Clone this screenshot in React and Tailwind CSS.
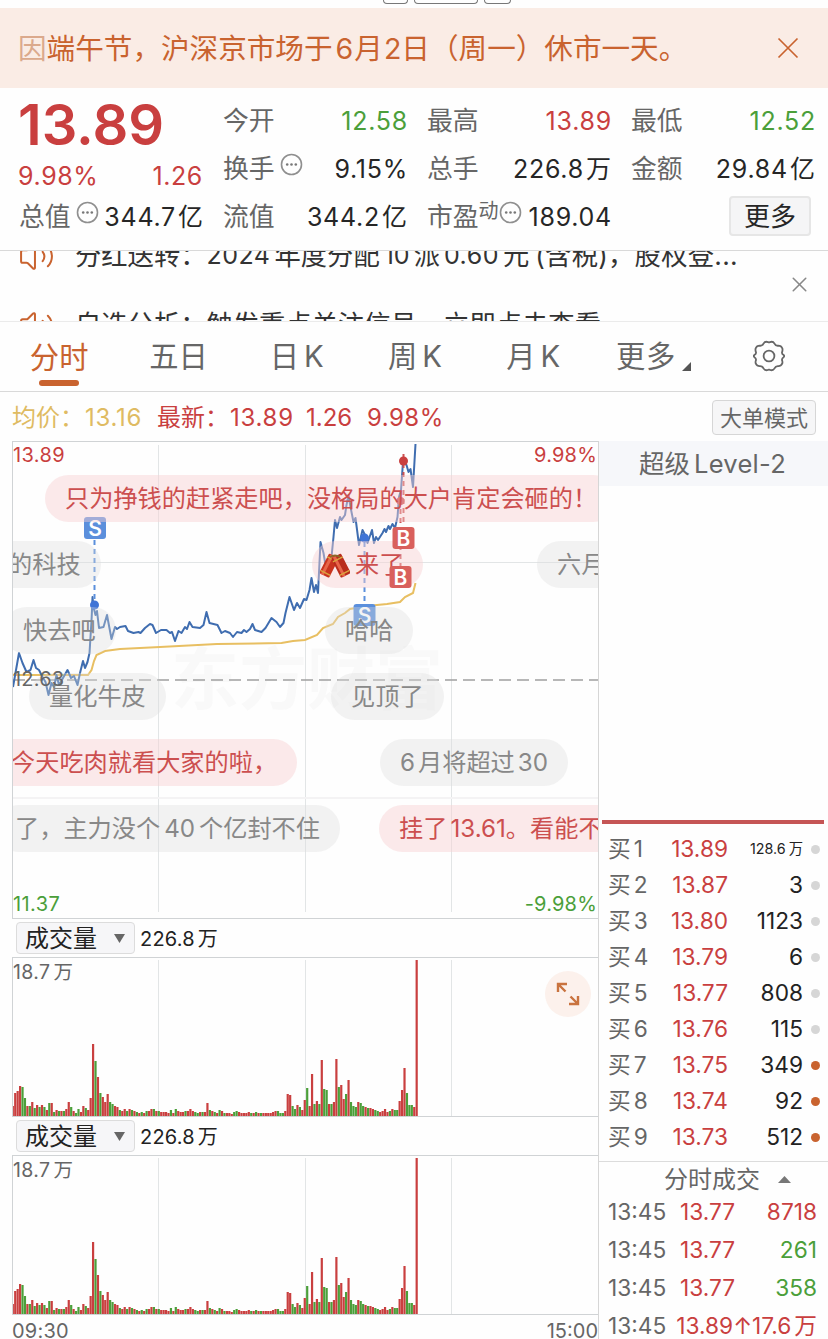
import { Volume2, X } from "lucide-react";

const RED = "#c93f3f";
const GREEN = "#4b9f3a";

const quoteColumns = [
    [
        { label: "今开", value: "12.58", tone: "text-[#4b9f3a]" },
        { label: "换手", value: "9.15%", info: true },
        { label: "流值", value: "344.2", unit: "亿" },
    ],
    [
        { label: "最高", value: "13.89", tone: "text-[#c93f3f]" },
        { label: "总手", value: "226.8", unit: "万" },
        { label: "市盈", value: "189.04", sup: "动", info: true },
    ],
    [
        { label: "最低", value: "12.52", tone: "text-[#4b9f3a]" },
        { label: "金额", value: "29.84", unit: "亿" },
    ],
];

const bids = [
    { n: 1, price: "13.89", vol: "128.6", unit: "万" },
    { n: 2, price: "13.87", vol: "3" },
    { n: 3, price: "13.80", vol: "1123" },
    { n: 4, price: "13.79", vol: "6" },
    { n: 5, price: "13.77", vol: "808" },
    { n: 6, price: "13.76", vol: "115" },
    { n: 7, price: "13.75", vol: "349", mine: true },
    { n: 8, price: "13.74", vol: "92", mine: true },
    { n: 9, price: "13.73", vol: "512", mine: true },
];

const trades = [
    { price: "13.77", vol: "8718", tone: "text-[#c93f3f]" },
    { price: "13.77", vol: "261", tone: "text-[#4b9f3a]" },
    { price: "13.77", vol: "358", tone: "text-[#4b9f3a]" },
];

// one bar per minute, negative = falling minute
const volumes = [
    10, 23, 25, 30, -29, -18, 10, -10, 14, -8, 11, -9, 11, -9, 6, -13, 13, -4, 6, -5, 5, -5, 7, 14, -9, 5, -3, -7, 4, 10,
    -8, 6, 18, 72, -55, 39, -23, 19, 14, 22, -14, -12, 10, 9, -6, 5, 7, -5, 7, -6, 5, -4, 3, -4, 3, -5, 5, 7, -7, 5,
    -5, 4, 4, 4, 3, -6, 3, -7, 5, 4, 4, -5, 5, 7, 5, -4, -3, 4, -4, 4, 13, -6, 5, -4, 3, -6, 5, -3, 3, 3,
    2, -4, -5, 4, 3, 3, 3, 4, -3, 3, -4, 3, -3, 3, 3, 3, 3, 4, 5, -5, -3, -3, 5, 22, 21, -10, -7, 11, -9, 6,
    16, -28, 10, 42, -12, 15, -12, 56, -27, -26, 12, -12, 14, 57, -29, 31, 17, -22, 36, -14, -10, -9, 14, -13, -10, 9, -8, 8, 7, -6,
    -5, 4, 5, 7, 4, -5, 7, -6, -6, 15, 26, 48, -23, -11, -11, 9, 156,
];

const pricePoints =
    "13,687 16,670 19,653 22.5,663 26.5,672 30.5,670 33.5,660 36,668 39,670 42.5,677 45.5,682 48.5,695 51.5,683 54,687 56.5,675 59,685 63,678 67.5,670 71,678 74,676 77.5,685 80,673 83,661 85,668 87.5,662 89.5,653 90.5,637 91.7,617 92.5,597 93.5,607 95.5,615 97,611 99,628 103.5,627 107,615 111.5,639 115,627 117,629 120,627 125.5,626 128,631 133.5,633 138.5,632 140.5,633 145,628 150,624 152.5,625 156,633 161,630 166.5,630 170,633 172,632 175,641 178.5,631 181.5,633 185,627 187,629 189.5,622 192.5,627 200,628 203.5,625 206.5,612 209.5,623 217.5,625 221.5,633 225,631 230,633 233,637 237,632 241.5,633 244,630 246.5,632 250,629 252.5,624 255,630 261.5,632 265.5,628 271.5,618 276.5,622 280,627 283.5,623 285.5,613 289.5,597 294,610 297,603 300,608 304,599 306.5,600 309.5,590 311.5,578 314,592 316,585 318,593 320.5,542 323.5,553 325.5,565 328.5,568 331.5,557 333.5,537 335,520 337,528 340,517 341.5,520 345,515 346.5,505 348.5,495 350.5,507 353.5,522 355.5,518 359,545 362.5,530 366,537 367.5,543 372,530 374,543 376,537 378,540 382.5,533 384.5,529 386,532 388.5,526 390,529 392.5,524 395,528 397.5,517 399,497 401,490 403,462 406.5,465 408.5,472 410.5,469 413,487 415.5,444";

const avgPoints =
    "13,675 88,675 91.5,670 94,661 96.5,655 105,651 120,649 160,647 217,644 281.5,643 293,641 305,640 317,635 323,628 333,624 338,617 345,613 350,609 367,606 387,604 400,602 405,597 413,593 415.5,583";

const Info = () => (
    <svg width="23" height="23" viewBox="0 0 23 23" fill="none" className="shrink-0">
        <circle cx="11.5" cy="11.5" r="10" stroke="#8f8f8f" strokeWidth="1.6" />
        <circle cx="7.2" cy="11.5" r="1.3" fill="#777" />
        <circle cx="11.5" cy="11.5" r="1.3" fill="#777" />
        <circle cx="15.8" cy="11.5" r="1.3" fill="#777" />
    </svg>
);

const Num = ({ value, unit }) => (
    <span className="flex items-center gap-[3px] pt-0.5 text-[25px]">
        <span className="-mr-px tracking-[0.03em]">{value}</span>
        {unit && <span>{unit}</span>}
    </span>
);

const QuoteCell = ({ label, value, unit, tone, info, sup }) => (
    <div className="flex h-12 items-center justify-between">
        <div className="flex items-center text-[25.8px] text-[#666]">
            {label}
            {sup && <span className="mb-3 text-[20px]">{sup}</span>}
            {info && <span className={sup ? "mb-2.5" : "mb-2.5 ml-[5px]"}><Info /></span>}
        </div>
        <div className={tone || "text-[#262626]"}>
            <Num value={value} unit={unit} />
        </div>
    </div>
);

const Notice = () => (
    <div className="flex h-20 items-center justify-between bg-[#faece5] pr-[29px] pl-[18px] text-[#c9632f]">
        <p className="flex items-center pt-[3px] text-[28.6px] whitespace-nowrap">
            <span className="text-[#dba98c]">因</span>
            端午节，沪深京市场于
            <span className="ml-[3px]">6</span>
            <span className="mx-px">月</span>
            2
            <span>日（周一）休市一天。</span>
        </p>
        <svg width="22" height="22" viewBox="0 0 22 22" stroke="#c9632f" strokeWidth="1.7">
            <path d="M1.5 1.5 20.5 20.5M20.5 1.5 1.5 20.5" />
        </svg>
    </div>
);

const Quote = () => (
    <section className="grid h-[163px] grid-cols-4 gap-x-5 border-b border-[#d9d9d9] pt-[9px] pr-[13px] pl-[19px]">
        <div>
            <div className="-ml-px flex h-14 items-center text-[56px] font-semibold text-[#c93f3f]">13.89</div>
            <div className="-ml-px flex h-10 items-center justify-between pt-[7px] text-[25px] tracking-[0.025em] text-[#c93f3f]">
                <span>9.98%</span>
                <span>1.26</span>
            </div>
            <div className="flex h-12 items-center justify-between">
                <span className="flex items-center text-[25.8px] text-[#666]">
                    总值<span className="mb-2.5 ml-[5px]"><Info /></span>
                </span>
                <Num value="344.7" unit="亿" />
            </div>
        </div>
        {quoteColumns.map((col, i) => (
            <div key={i}>
                {col.map((c) => <QuoteCell key={c.label} {...c} />)}
                {i === 2 && (
                    <div className="flex h-[45px] items-center justify-end pr-1">
                        <button className="h-10 w-[82px] rounded border-2 border-[#e6e6e6] bg-[#f5f5f6] pt-0.5 text-[26px] leading-none text-[#262626]">更多</button>
                    </div>
                )}
            </div>
        ))}
    </section>
);

const News = () => (
    <section className="relative h-[71px] overflow-hidden border-b border-[#ebebeb] pl-[18px] text-[26.3px] text-[#333]">
        <div className="-mt-7 flex h-[66px] items-center whitespace-nowrap">
            <Volume2 size={37} strokeWidth={1.3} className="mr-[20px] text-[#c9632f]" />
            分红送转：
            <span className="text-[25px] tracking-[0.02em]">2024</span>
            <span className="mx-1">年度分配</span>
            <span className="text-[25px]">10</span>
            <span className="mx-1">派</span>
            <span className="text-[25px] tracking-[0.02em]">0.60</span>
            <span className="ml-1">元</span>
            <span className="ml-1.5 tracking-[0.01em]">(含税)，股权登...</span>
        </div>
        <div className="mt-[3px] flex h-[66px] items-center whitespace-nowrap">
            <Volume2 size={37} strokeWidth={1.3} className="mr-[20px] text-[#c9632f]" />
            自选分析：触发重点关注信号，立即点击查看
        </div>
        <X size={25} strokeWidth={1.5} className="absolute top-[21px] right-[16px] text-[#888]" />
    </section>
);

const Gear = () => (
    <svg width="34" height="32" viewBox="0 0 34 32" fill="none" stroke="#666" strokeWidth="1.8" strokeLinejoin="round">
        <path d="M11.5 3.6Q13 1 16 2.1Q17 2.6 18 2.1Q21 1 22.5 3.6Q23.6 6 26.2 5.7Q29.3 5.7 30.4 8.5Q30.8 10.5 30 12.3Q29.7 14 31.6 15Q32.8 16 31.6 17.2Q29.7 18.4 30 20.2Q30.8 22 30.2 23.7Q29 26.3 26.2 26.2Q23.6 26 22.5 28.4Q21 31 18 29.9Q17 29.4 16 29.9Q13 31 11.5 28.4Q10.4 26 7.8 26.2Q5 26.3 3.8 23.7Q3.2 22 4 20.2Q4.3 18.4 2.4 17.2Q1.2 16 2.4 15Q4.3 14 4 12.3Q3.2 10.5 3.6 8.5Q4.7 5.7 7.8 5.7Q10.4 6 11.5 3.6Z" />
        <circle cx="17" cy="16" r="5.4" />
    </svg>
);

const Tabs = () => (
    <nav className="grid h-[70px] grid-cols-7 border-b border-[#d9d9d9] text-[29.3px] text-[#666]">
        <div className="flex flex-col items-center text-[#c9632f]">
            <span className="mt-[14px] leading-[44px]">分时</span>
            <span className="h-1.5 w-10 rounded-full bg-[#c9632f]" />
        </div>
        {["五日", "日K", "周K", "月K"].map((t) => (
            <div key={t} className="flex justify-center pt-[13px] pl-0.5 leading-[44px]">
                {t[0]}
                <span className={t[1] === "K" ? "ml-[5px]" : ""}>{t[1]}</span>
            </div>
        ))}
        <div className="flex justify-center pt-[13px] pl-1.5 leading-[44px]">
            <span className="tracking-wide">更多</span>
            <svg width="9" height="9" viewBox="0 0 9 9" className="mt-[27px] ml-1.5"><path d="M9 0V9H0Z" fill="#555" /></svg>
        </div>
        <div className="flex justify-center pt-[18px]"><Gear /></div>
    </nav>
);

const Legend = () => (
    <div className="flex h-[49px] items-center px-3 pt-0.5 text-[24px] whitespace-nowrap text-[#c93f3f]">
        <span className="flex w-[145px] text-[#dfbb62]">均价：<span className="ml-px tracking-[0.03em]">13.16</span></span>
        <span className="flex w-[149px]">最新：<span className="ml-px tracking-[0.03em]">13.89</span></span>
        <span className="w-[61px]">1.26</span>
        <span className="tracking-[0.02em]">9.98%</span>
        <button className="ml-auto h-[35px] w-[104px] rounded border border-[#d6d6d6] bg-[#f6f6f7] text-[22px] leading-none text-[#666]">大单模式</button>
    </div>
);

const Pill = ({ children, className, red }) => (
    <div
        className={`absolute flex h-[47px] items-center rounded-full px-5 pt-px text-[24.2px] whitespace-nowrap ${className} ${
            red ? "bg-[#f8d0d3]/45 text-[#cc4f4f]" : "bg-[#dedede]/35 text-[#888]"
        }`}
    >
        {children}
    </div>
);

const Firecracker = () => (
    <svg width="30" height="28" viewBox="0 0 30 28">
        <g transform="rotate(27 14 4)">
            <rect x="8" y="3" width="11" height="22" rx="1.5" fill="#c9341f" />
            <rect x="10" y="3" width="3" height="22" fill="#e8664a" />
            <path d="M8 7h11M8 22h11" stroke="#dba53f" strokeWidth="1.5" />
        </g>
        <g transform="rotate(-27 16 4)">
            <rect x="11" y="3" width="11" height="22" rx="1.5" fill="#b92c1b" />
            <rect x="13" y="3" width="3" height="22" fill="#e8664a" />
            <path d="M11 7h11M11 22h11" stroke="#dba53f" strokeWidth="1.5" />
        </g>
        <path d="M10 4q5-3 10 0" stroke="#8a6a2a" strokeWidth="2" fill="none" />
    </svg>
);

const Mark = ({ x, y, type }) => (
    <g>
        <rect x={x - 11} y={y - 11} width="22" height="22" rx="3" fill={type === "S" ? "#5b8fdc" : "#d9605c"} />
        <text x={x} y={y + 7.6} textAnchor="middle" fontSize="21" fontWeight="600" fill="#fff">{type}</text>
    </g>
);

const Grid = ({ y1, y2 }) => (
    <g stroke="#e2e5e6">
        {[158.5, 305.5, 451.5].map((x) => <line key={x} x1={x} x2={x} y1={y1} y2={y2} />)}
    </g>
);

const PriceChart = () => (
    <div className="relative h-[478px] overflow-hidden border-y border-l border-[#d0d3d5] text-xl">
        <div className="absolute top-[190px] left-[158px] text-[68px] font-bold text-[#f9f9f9]">东方财富</div>
        <svg width="586" height="476" viewBox="13 442 586 476" className="absolute inset-0">
            <Grid y1={445} y2={912} />
            <path d="M13 562.5H598" stroke="#e2e5e6" />
            <path d="M13 798H598" stroke="#f4f3f4" strokeWidth="2" />
            <path d="M13 680H598" stroke="#a0a0a0" strokeWidth="1.5" strokeDasharray="12 6" />
            <polyline points={avgPoints} fill="none" stroke="#e8bf62" strokeWidth="2" />
            <polyline points={pricePoints} fill="none" stroke="#3f6db0" strokeWidth="2" strokeLinejoin="round" />
            <g strokeWidth="2" strokeDasharray="5 4">
                <path d="M94.5 540V600M364.5 542V603" stroke="#5b8fdc" />
                <path d="M403.5 454V526M400.5 500V566" stroke="#cc5252" />
            </g>
            <circle cx="94.5" cy="605" r="4.5" fill="#3f74d6" />
            <circle cx="364.5" cy="538" r="4.5" fill="#3f74d6" />
            <circle cx="403.5" cy="461" r="4.5" fill={RED} />
            <circle cx="400.5" cy="501" r="4" fill={RED} />
            <Mark x={95} y={528} type="S" />
            <Mark x={364.5} y={615} type="S" />
        </svg>
        <Pill red className="top-[33px] left-[32px]">只为挣钱的赶紧走吧，没格局的大户肯定会砸的！</Pill>
        <Pill className="top-[99px] -left-[25px]">的科技</Pill>
        <Pill red className="top-[99px] left-[299px] pl-2">
            <span className="pt-1"><Firecracker /></span>
            <span className="ml-[5px]">来了</span>
        </Pill>
        <Pill className="top-[99px] left-[524px]">六月底</Pill>
        <Pill className="top-[165px] -left-[10px]">快去吧</Pill>
        <Pill className="top-[165px] left-[312px]">哈哈</Pill>
        <Pill className="top-[231px] left-[16px]">量化牛皮</Pill>
        <Pill className="top-[231px] left-[318px]">见顶了</Pill>
        <Pill red className="top-[297px] -left-[22px]">今天吃肉就看大家的啦，</Pill>
        <Pill className="top-[297px] left-[367px]">6<span className="mx-[3px]">月将超过</span>30</Pill>
        <Pill className="top-[363px] -left-[18px]">了，主力没个<span className="mx-[4px]">40</span>个亿封不住</Pill>
        <Pill red className="top-[363px] left-[366px]">挂了<span className="ml-[3px]">13.61</span>。看能不能</Pill>
        <svg width="586" height="476" viewBox="13 442 586 476" className="absolute inset-0">
            <Mark x={403.5} y={538} type="B" />
            <Mark x={400.5} y={577} type="B" />
        </svg>
        <span className="absolute top-0 left-0 leading-[27px] tracking-[0.02em] text-[#c93f3f]">13.89</span>
        <span className="absolute top-0 right-px leading-[27px] tracking-[0.01em] text-[#c93f3f]">9.98%</span>
        <span className="absolute top-[224px] left-0 leading-[27px] tracking-[0.01em] text-[#666]">12.63</span>
        <span className="absolute bottom-[1px] left-0 leading-[26px] tracking-[0.02em] text-[#4b9f3a]">11.37</span>
        <span className="absolute right-px bottom-[1px] leading-[26px] tracking-[0.01em] text-[#4b9f3a]">-9.98%</span>
    </div>
);

const VolumeBar = () => (
    <div className="flex h-[38px] items-center pl-1">
        <button className="flex h-8 w-[119px] items-center justify-between rounded-sm border border-[#dcdcdc] bg-[#f6f6f8] pt-px pr-[9px] pl-2 text-2xl leading-none font-normal text-[#222]">
            成交量
            <svg width="11" height="9" viewBox="0 0 11 9"><path d="M0 0H11L5.5 9Z" fill="#666" /></svg>
        </button>
        <span className="ml-[5px] flex gap-[3px] pt-0.5 text-[20px] text-[#222]"><span className="tracking-[0.01em]">226.8</span><span>万</span></span>
    </div>
);

const VolumeChart = () => (
    <div className="relative h-[160px] border-y border-l border-[#d0d3d5]">
        <svg width="586" height="158" viewBox="13 0 586 158" className="block">
            <Grid y1={2} y2={158} />
            {volumes.map((v, i) => (
                <rect key={i} x={11.7 + i * 2.433} y={158 - Math.abs(v)} width="2.2" height={Math.abs(v)} fill={v < 0 ? GREEN : RED} />
            ))}
        </svg>
        <span className="absolute top-0 left-0 flex gap-[3px] text-[19.5px] leading-[29px] text-[#666]"><span className="tracking-[0.02em]">18.7</span><span>万</span></span>
    </div>
);

const Expand = () => (
    <div className="absolute top-[14px] right-[7px] flex size-[46px] items-center justify-center rounded-full bg-[#fcf1ec]">
        <svg width="24" height="24" viewBox="0 0 24 24" fill="none" stroke="#c9733f" strokeWidth="2.4">
            <path d="M2 10V2H11M2 2 9.5 9.5M22 14V22H13M22 22 14.5 14.5" />
        </svg>
    </div>
);

const OrderBook = () => (
    <aside className="flex w-[230px] flex-col border-l border-[#d6d6d6]">
        <div className="flex h-[45px] items-center justify-center gap-1 bg-[#f6f7fa] pt-0.5 pr-0.5 text-[25.5px] text-[#666]">
            <span>超级</span><span className="tracking-[0.01em]">Level-2</span>
        </div>
        <div className="mr-1 ml-[3px] mt-[334px] h-1 bg-[#c55555]" />
        <div className="mt-[7px] h-[331px] border-b border-[#dcdcdc]">
            {bids.map((b) => (
                <div key={b.n} className="flex h-9 items-center pr-2 pl-[9px] text-[22.7px]">
                    <span className="flex w-[50px] gap-[3px] text-[#666]"><span>买</span><span>{b.n}</span></span>
                    <span className="w-[70px] text-right text-[#c93f3f]">{b.price}</span>
                    <span className={`flex flex-1 justify-end gap-[3px] text-[#222] ${b.unit ? "text-[14.3px]" : ""}`}>
                        <span>{b.vol}</span>{b.unit && <span>{b.unit}</span>}
                    </span>
                    <span className={`ml-2 size-[9px] rounded-full ${b.mine ? "bg-[#c9632f]" : "bg-[#d6d6d6]"}`} />
                </div>
            ))}
        </div>
        <div className="flex h-[31px] items-center justify-center gap-[18px] pt-1 pl-7 text-2xl text-[#666]">
            分时成交
            <svg width="13" height="7" viewBox="0 0 13 7"><path d="M0 7L6.5 0L13 7Z" fill="#777" /></svg>
        </div>
        {trades.map((t, i) => (
            <div key={i} className="flex h-[38px] items-center pr-[11px] pl-[9px] text-[22.7px]">
                <span className="w-[72px] text-[#666]">13:45</span>
                <span className="text-[#c93f3f]">{t.price}</span>
                <span className={`flex-1 text-right ${t.tone}`}>{t.vol}</span>
            </div>
        ))}
        <div className="flex h-[38px] items-center justify-between pr-[11px] pl-[9px] text-[22.7px] text-[#c93f3f]">
            <span className="text-[#666]">13:45</span>
            <span className="flex"><span>13.89↑17.6</span><span className="ml-[3px]">万</span></span>
        </div>
    </aside>
);

const App = () => (
    <div className="h-[1339px] w-[828px] overflow-hidden bg-[#fefefe] font-['Inter','Noto_Sans_CJK_SC',sans-serif] font-[385] text-[#262626]">
        <div className="flex h-2 items-start gap-1.5 pl-[383px]">
            <div className="h-1 w-[25px] rounded-b border border-t-0 border-[#777]" />
            <div className="h-1 w-[64px] rounded-b border border-t-0 border-[#777]" />
            <div className="h-1 w-[27px] rounded-b border border-t-0 border-[#777]" />
        </div>
        <Notice />
        <Quote />
        <News />
        <Tabs />
        <Legend />
        <main className="flex">
            <div className="ml-3 w-[586px] shrink-0">
                <PriceChart />
                <VolumeBar />
                <div className="relative">
                    <VolumeChart />
                    <Expand />
                </div>
                <VolumeBar />
                <VolumeChart />
                <div className="flex h-8 items-center justify-between text-xl text-[#666]">
                    <span className="tracking-[0.01em]">09:30</span>
                    <span>15:00</span>
                </div>
            </div>
            <OrderBook />
        </main>
    </div>
);

export default App;
